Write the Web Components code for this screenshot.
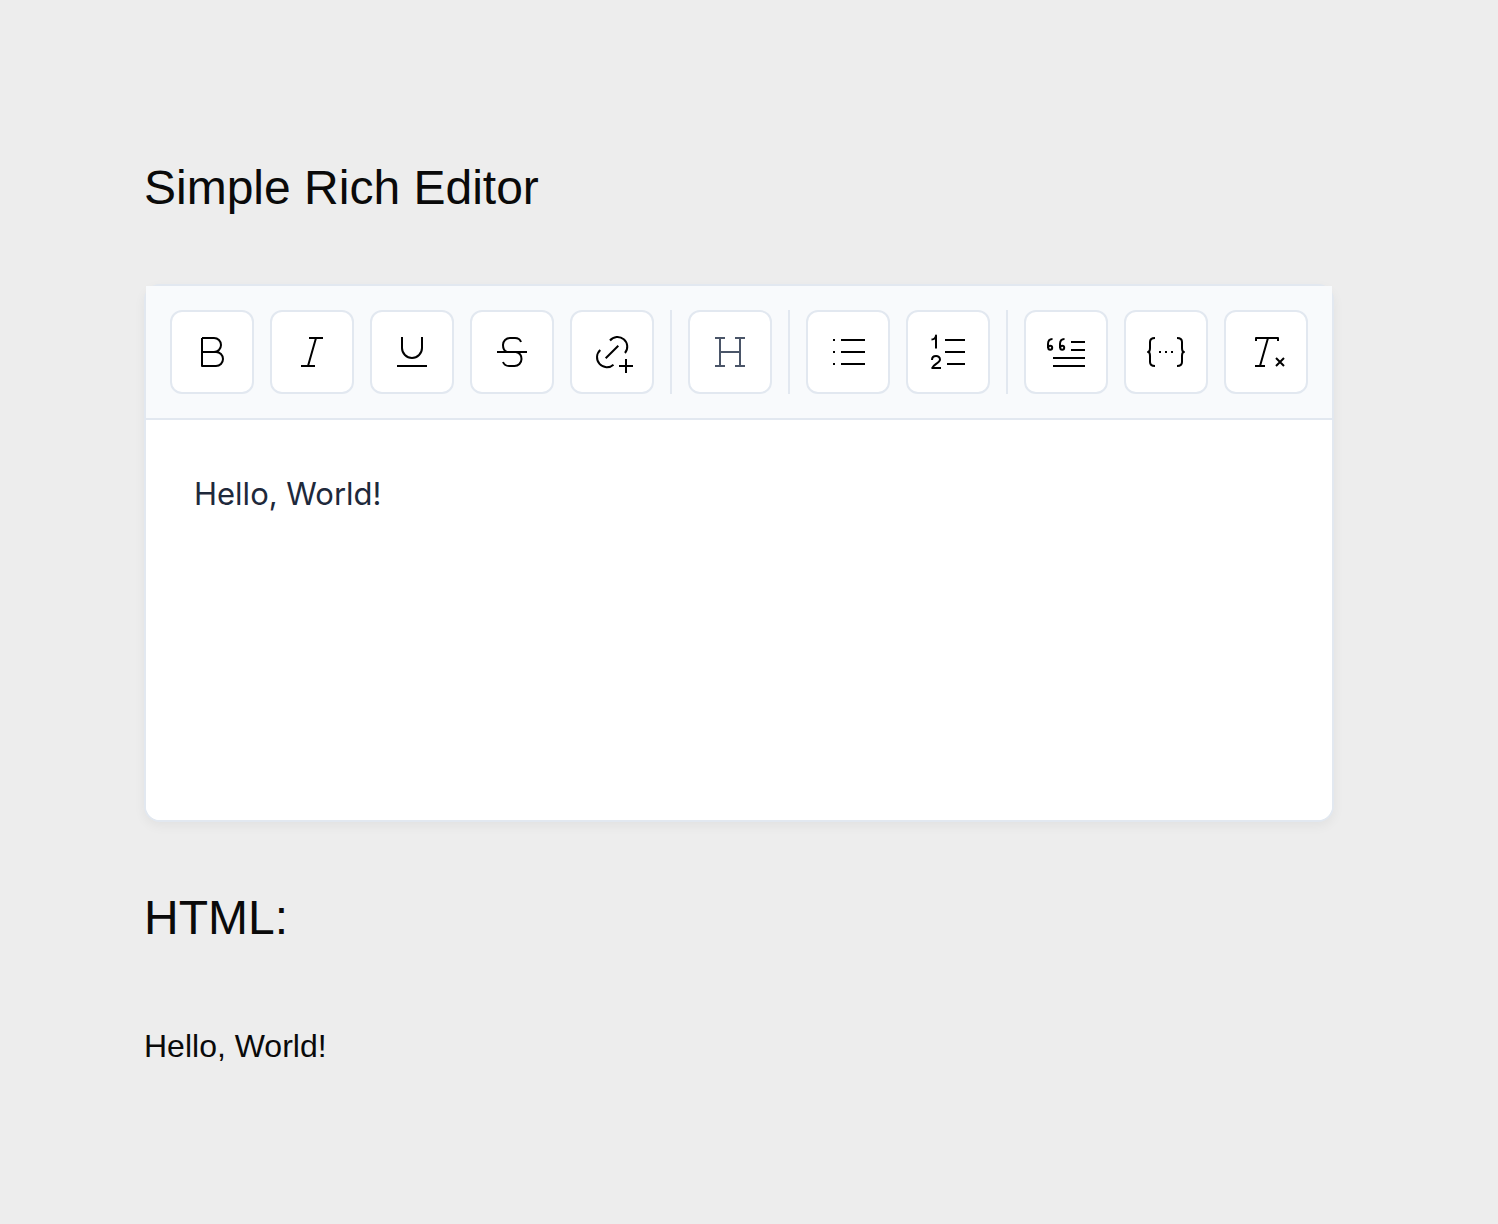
<!DOCTYPE html>
<html lang="en">
<head>
<meta charset="utf-8">
<meta name="viewport" content="width=device-width, initial-scale=1">
<title>Simple Rich Editor</title>
<style>
  body { margin: 0; background: #ededed; color: #0a0a0a; font-family: "Liberation Sans", Arial, sans-serif; }
</style>
</head>
<body>
<editor-page>
  <page-heading slot="title" level="1">Simple Rich Editor</page-heading>
  <rich-editor value="Hello, World!"></rich-editor>
  <page-heading level="2">HTML:</page-heading>
  <html-output>Hello, World!</html-output>
</editor-page>

<script>
const icons = {
  bold: '<path d="M14 10H26A7 7 0 0 1 26 24H14M26 24H28A7 7 0 0 1 28 38H14V10"/>',
  italic: '<path d="M21 10H35M13 38H27M28 10L20 38"/>',
  underline: '<path d="M14 9V20A10 10 0 0 0 34 20V9M9 38H39"/>',
  strike: '<path d="M33 14C32 11 30 10 27 10H22A7 7 0 0 0 15 17C15 20 16 23 19 24H28C32 25 33.500 28 33.500 31A7 7 0 0 1 26.500 38H21C18 38 16 36.500 15 34M9 24H39"/>',
  link: '<path d="M22 12.500A9.700 9.700 0 1 1 37 25M12.300 22A9.700 9.700 0 1 0 25.500 36.700M17.700 30.300L30.300 17.700M38 31V45M31 38H45"/>',
  heading: '<path d="M14 10V38M34 10V38M14 24H34M9 10H19M29 10H39M9 38H19M29 38H39"/>',
  bullets: '<path d="M17 12H41M17 24H41M17 36H41"/><path stroke-linecap="butt" d="M9 12H11M9 24H11M9 36H11"/>',
  numbers: '<path d="M21 12H41M21 24H41M23 36H41"/><path stroke-width="2" stroke-linecap="butt" d="M7.500 11.500C10 11.500 11.700 10 12 7.500V20.500M8 32C8 26.800 16 26.800 16 31.500C16 35 9 36.500 8.200 40H17"/>',
  quote: '<path d="M29 14H43M29 22H43M11 30H43M11 38H43"/><path d="M10.500 11C7.500 11 6 13 6 16V20M22.500 11C19.500 11 18 13 18 16V20"/><circle cx="8.200" cy="19.800" r="2"/><circle cx="20.200" cy="19.800" r="2"/>',
  code: '<path d="M13 10C9.500 10 8 12 8 14V20C8 22 7.500 24 6 24C7.500 24 8 26 8 28V34C8 36 9.500 38 13 38M35 10C38.500 10 40 12 40 14V20C40 22 40.500 24 42 24C40.500 24 40 26 40 28V34C40 36 38.500 38 35 38"/><path stroke-linecap="butt" d="M17 24H19M23 24H25M29 24H31"/>',
  clear: '<path d="M14 13V10H36V13M26 10L18 38M13 38H23M34 30L42 38M42 30L34 38"/>'
};

class EditorPage extends HTMLElement {
  constructor() {
    super();
    this.attachShadow({ mode: 'open' }).innerHTML = `
      <style>
        :host { display: block; }
        main { display: flex; flex-direction: column; align-items: flex-start; gap: 60px; padding: 152px 144px; }
      </style>
      <main><slot name="title"></slot><slot></slot></main>`;
  }
}

class PageHeading extends HTMLElement {
  connectedCallback() {
    const tag = 'h' + this.getAttribute('level');
    this.attachShadow({ mode: 'open' }).innerHTML = `
      <style>
        :host { display: block; }
        h1, h2 { margin: 0; font-size: 48px; line-height: 72px; font-weight: 400; }
      </style>
      <${tag}><slot></slot></${tag}>`;
  }
}

class HtmlOutput extends HTMLElement {
  constructor() {
    super();
    this.attachShadow({ mode: 'open' }).innerHTML = `
      <style>
        :host { display: block; }
        p { margin: 0; font-size: 32px; line-height: 64px; }
      </style>
      <p><slot></slot></p>`;
  }
}

class ToolButton extends HTMLElement {
  connectedCallback() {
    this.attachShadow({ mode: 'open' }).innerHTML = `
      <style>
        :host { display: block; color: #000; }
        :host([icon="heading"]) { color: #4a5568; }
        button { display: flex; align-items: center; justify-content: center; box-sizing: border-box; width: 84px; height: 84px; padding: 0; border: 2px solid #e2e8f0; border-radius: 12px; background: #fff; color: inherit; cursor: pointer; }
        button:hover { background: #f1f5f9; }
        svg { width: 48px; height: 48px; fill: none; stroke: currentColor; stroke-width: 2; stroke-linejoin: round; }
      </style>
      <button type="button" aria-label="${this.getAttribute('label')}">
        <svg viewBox="0 0 48 48" aria-hidden="true">${icons[this.getAttribute('icon')]}</svg>
      </button>`;
  }
}

class ToolDivider extends HTMLElement {
  constructor() {
    super();
    this.attachShadow({ mode: 'open' }).innerHTML = `
      <style>:host { display: block; align-self: stretch; width: 2px; background: #e2e8f0; }</style>`;
  }
}

class RichEditor extends HTMLElement {
  connectedCallback() {
    this.attachShadow({ mode: 'open' }).innerHTML = `
      <style>
        :host { display: block; max-width: 100%; border: 2px solid #e2e8f0; border-radius: 16px; background: #fff; box-shadow: 0 4px 12px rgba(0, 0, 0, .05); box-sizing: border-box; }
        .toolbar { display: flex; flex-wrap: wrap; gap: 16px; padding: 24px; border-bottom: 2px solid #e2e8f0; background: #f8fafc; }
        textarea { display: block; box-sizing: border-box; width: 100%; min-height: 400px; margin: 0; padding: 48px; border: 0; outline: 0; border-radius: 0 0 14px 14px; background: #fff; color: #1e293b; font-family: Inter, sans-serif; font-size: 31px; line-height: 52px; resize: none; }
      </style>
      <div class="toolbar" role="toolbar" aria-label="Formatting">
        <tool-button icon="bold" label="Bold"></tool-button>
        <tool-button icon="italic" label="Italic"></tool-button>
        <tool-button icon="underline" label="Underline"></tool-button>
        <tool-button icon="strike" label="Strikethrough"></tool-button>
        <tool-button icon="link" label="Add link"></tool-button>
        <tool-divider></tool-divider>
        <tool-button icon="heading" label="Heading"></tool-button>
        <tool-divider></tool-divider>
        <tool-button icon="bullets" label="Bulleted list"></tool-button>
        <tool-button icon="numbers" label="Numbered list"></tool-button>
        <tool-divider></tool-divider>
        <tool-button icon="quote" label="Quote"></tool-button>
        <tool-button icon="code" label="Code"></tool-button>
        <tool-button icon="clear" label="Clear formatting"></tool-button>
      </div>
      <textarea aria-label="Content" spellcheck="false"></textarea>`;
    this.shadowRoot.querySelector('textarea').value = this.getAttribute('value');
  }
}

customElements.define('editor-page', EditorPage);
customElements.define('page-heading', PageHeading);
customElements.define('html-output', HtmlOutput);
customElements.define('tool-button', ToolButton);
customElements.define('tool-divider', ToolDivider);
customElements.define('rich-editor', RichEditor);
</script>
</body>
</html>
